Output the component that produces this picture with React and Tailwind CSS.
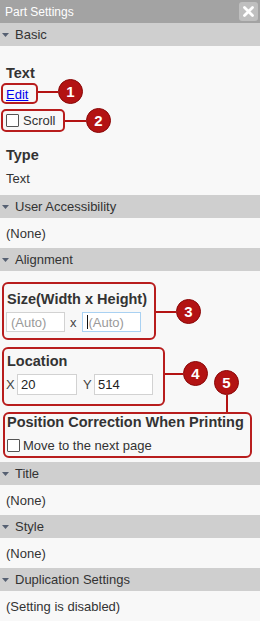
import React from 'react';

// Red numbered marker with a short leader line
const Marker = ({ n }) => (
  <div className="w-[25px] h-[25px] rounded-full bg-[#b31313] border border-[#8a0808] flex items-center justify-center text-white text-[15px] font-bold leading-none shrink-0">
    {n}
  </div>
);

const Callout = ({ n, line = 20, top = 0 }) => (
  <div className="absolute left-[calc(100%+2px)] flex items-center" style={{ top }}>
    <div className="h-[2px] bg-[#b31313]" style={{ width: line }}></div>
    <Marker n={n} />
  </div>
);

const SectionHeader = ({ title }) => (
  <div className="h-[23px] bg-[#cfcfcf] flex items-center">
    <svg width="7" height="4" viewBox="0 0 7 4" className="ml-[2px] mr-[6px] shrink-0">
      <path d="M0 0H7L3.5 4Z" fill="#566072" />
    </svg>
    <span className="text-[13px] leading-[15px] text-[#333]">{title}</span>
  </div>
);

const Plain = ({ children }) => (
  <div className="h-[30px] flex items-center pl-[6px] text-[13px] leading-[15px] text-[#333]">
    {children}
  </div>
);

const Label = ({ children, className = '' }) => (
  <div className={`text-[14.5px] leading-[17px] font-bold text-[#333] whitespace-nowrap ${className}`}>
    {children}
  </div>
);

const Check = () => (
  <span className="w-[13px] h-[13px] border border-[#555] bg-white rounded-[1px] shrink-0"></span>
);

export default function App() {
  return (
    <div className="w-[260px] h-[621px] overflow-hidden bg-[#f8f8f8] font-['Liberation_Sans',Arial,sans-serif]">
      {/* Title bar */}
      <div className="h-[23px] bg-[#a3a3a3] flex items-center justify-between pl-[5px] pr-[2px]">
        <span className="text-[12px] leading-[14px] text-white">Part Settings</span>
        <div className="w-[19px] h-[19px] rounded-[3px] bg-[#bfbfbf] flex items-center justify-center">
          <svg width="11" height="11" viewBox="0 0 11 11">
            <path d="M1.5 1.5L9.5 9.5M9.5 1.5L1.5 9.5" stroke="#fff" strokeWidth="2.8" strokeLinecap="round" />
          </svg>
        </div>
      </div>

      {/* Basic */}
      <SectionHeader title="Basic" />
      <div className="h-[149px] pt-[19px]">
        <Label className="pl-[6px]">Text</Label>
        <div className="relative mt-[1px] ml-[1px] w-[37px] h-[21px] border-2 border-[#b81d1d] rounded-[5px] pt-[3px] pl-[3px]">
          <a className="block text-[13px] leading-[14px] text-[#0000ee] underline">Edit</a>
          <Callout n="1" line={20} top={-6} />
        </div>
        <div className="relative mt-[5px] ml-[1px] w-[64px] h-[23px] border-2 border-[#b81d1d] rounded-[5px] pl-[3px] flex items-center gap-[4px]">
          <Check />
          <span className="text-[13px] leading-[15px] text-[#333]">Scroll</span>
          <Callout n="2" line={21} top={-3} />
        </div>
        <Label className="pl-[6px] mt-[15px]">Type</Label>
        <div className="pl-[6px] mt-[7px] text-[13px] leading-[16px] text-[#333]">Text</div>
      </div>

      {/* User Accessibility */}
      <SectionHeader title="User Accessibility" />
      <Plain>(None)</Plain>

      {/* Alignment */}
      <SectionHeader title="Alignment" />
      <div className="h-[191px] pt-[11px]">
        <div className="relative ml-[2px] w-[154px] h-[58px] border-2 border-[#b81d1d] rounded-[6px] pt-[7px] pl-[2px]">
          <Label className="pl-[1px]">Size(Width x Height)</Label>
          <div className="mt-[4px] flex items-center">
            <div className="w-[59px] h-[20px] border border-[#d2d2d2] bg-white pl-[4px] flex items-center text-[13px] leading-[15px] text-[#9a9a9a]">
              (Auto)
            </div>
            <span className="mx-[5px] text-[13px] leading-[15px] text-[#444]">x</span>
            <div className="w-[59px] h-[20px] border border-[#a9d1f2] bg-white pl-[4px] flex items-center text-[13px] leading-[15px] text-[#9a9a9a]">
              <span className="w-px h-[14px] bg-[#111] mr-[1px]"></span>
              (Auto)
            </div>
          </div>
          <Callout n="3" line={20} top={15} />
        </div>

        <div className="relative mt-[7px] ml-[2px] w-[163px] h-[59px] border-2 border-[#b81d1d] rounded-[6px] pt-[4px] pl-[2px]">
          <Label className="pl-[1px]">Location</Label>
          <div className="mt-[4px] flex items-center text-[13px] leading-[15px]">
            <span className="w-[11px] text-[#444]">X</span>
            <div className="w-[60px] h-[21px] border border-[#d2d2d2] bg-white pl-[3px] flex items-center text-[#222]">20</div>
            <span className="ml-[6px] w-[11px] text-[#444]">Y</span>
            <div className="w-[59px] h-[21px] border border-[#d2d2d2] bg-white pl-[3px] flex items-center text-[#222]">514</div>
          </div>
          <Callout n="4" line={18} top={12} />
        </div>

        <div className="relative mt-[6px] ml-[3px] w-[249px] h-[46px] border-2 border-[#b81d1d] rounded-[6px] pl-[2px]">
          <Label>Position Correction When Printing</Label>
          <div className="mt-[5px] h-[19px] flex items-center gap-[3px]">
            <Check />
            <span className="text-[13px] leading-[15px] text-[#333]">Move to the next page</span>
          </div>
          {/* marker 5 sits above the box with a vertical leader */}
          <div className="absolute bottom-full mb-[2px] left-[209px] flex flex-col items-center">
            <Marker n="5" />
            <div className="w-[2px] h-[17px] bg-[#b31313]"></div>
          </div>
        </div>
      </div>

      {/* Title */}
      <SectionHeader title="Title" />
      <Plain>(None)</Plain>

      {/* Style */}
      <SectionHeader title="Style" />
      <Plain>(None)</Plain>

      {/* Duplication Settings */}
      <SectionHeader title="Duplication Settings" />
      <Plain>(Setting is disabled)</Plain>
    </div>
  );
}
